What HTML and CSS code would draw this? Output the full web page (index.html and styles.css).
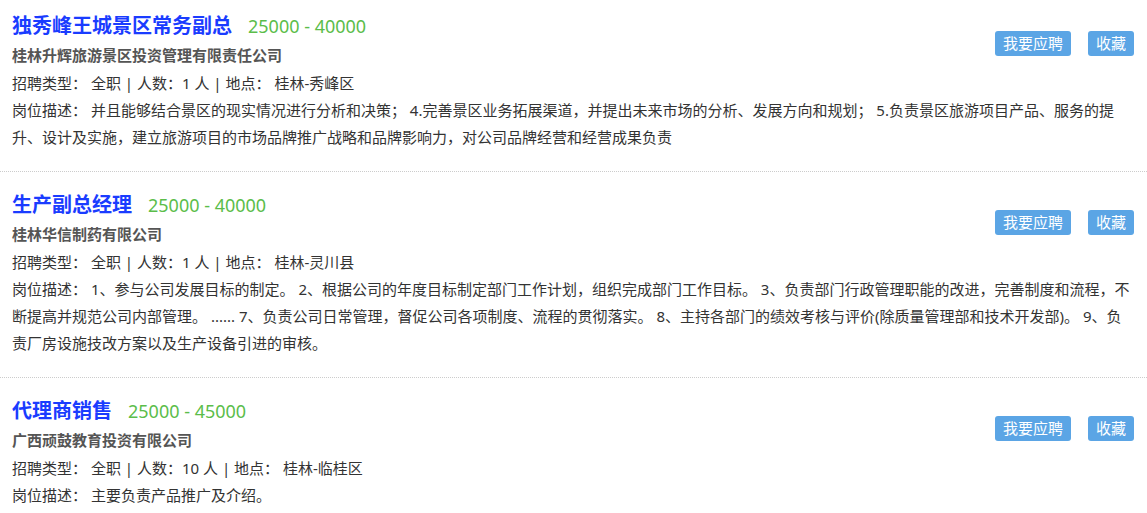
FILE: index.html
```html
<!DOCTYPE html>
<html lang="zh-CN">
<head>
    <meta charset="UTF-8">
    <meta name="viewport" content="width=device-width, initial-scale=1.0">
    <title>职位列表</title>
    <link rel="stylesheet" href="styles.css">
</head>
<body>
    <ul class="job-list">
        <li class="job">
            <div class="actions">
                <a href="#" class="btn">我要应聘</a>
                <a href="#" class="btn">收藏</a>
            </div>
            <h2 class="job-title"><a href="#">独秀峰王城景区常务副总</a><span class="salary">25000 - 40000</span></h2>
            <p class="company">桂林升辉旅游景区投资管理有限责任公司</p>
            <p class="info">招聘类型： 全职 | 人数：1 人 | 地点： 桂林-秀峰区</p>
            <p class="desc">岗位描述： 并且能够结合景区的现实情况进行分析和决策； 4.完善景区业务拓展渠道，并提出未来市场的分析、发展方向和规划； 5.负责景区旅游项目产品、服务的提升、设计及实施，建立旅游项目的市场品牌推广战略和品牌影响力，对公司品牌经营和经营成果负责</p>
        </li>
        <li class="job">
            <div class="actions">
                <a href="#" class="btn">我要应聘</a>
                <a href="#" class="btn">收藏</a>
            </div>
            <h2 class="job-title"><a href="#">生产副总经理</a><span class="salary">25000 - 40000</span></h2>
            <p class="company">桂林华信制药有限公司</p>
            <p class="info">招聘类型： 全职 | 人数：1 人 | 地点： 桂林-灵川县</p>
            <p class="desc">岗位描述： 1、参与公司发展目标的制定。 2、根据公司的年度目标制定部门工作计划，组织完成部门工作目标。 3、负责部门行政管理职能的改进，完善制度和流程，不断提高并规范公司内部管理。 ...... 7、负责公司日常管理，督促公司各项制度、流程的贯彻落实。 8、主持各部门的绩效考核与评价(除质量管理部和技术开发部)。 9、负责厂房设施技改方案以及生产设备引进的审核。</p>
        </li>
        <li class="job">
            <div class="actions">
                <a href="#" class="btn">我要应聘</a>
                <a href="#" class="btn">收藏</a>
            </div>
            <h2 class="job-title"><a href="#">代理商销售</a><span class="salary">25000 - 45000</span></h2>
            <p class="company">广西顽鼓教育投资有限公司</p>
            <p class="info">招聘类型： 全职 | 人数：10 人 | 地点： 桂林-临桂区</p>
            <p class="desc">岗位描述： 主要负责产品推广及介绍。</p>
        </li>
    </ul>
</body>
</html>
```

FILE: styles.css
```css
body {
    margin: 0;
    font-family: "Noto Sans", "Noto Sans CJK SC", sans-serif;
    font-size: 15px;
    color: #333;
    background-color: #fff;
}
.job-list {
    list-style: none;
    margin: 0;
    padding: 0;
}
.job {
    padding: 18px 12px 20px 12px;
    border-bottom: 1px dotted #ccc;
}
.job:first-child {
    padding-top: 11px;
}
.job:last-child {
    border-bottom: none;
}
.job p {
    margin: 0;
}
.actions {
    float: right;
    display: flex;
    gap: 17px;
    margin-top: 20px;
    margin-right: 1px;
}
.btn {
    display: block;
    height: 25px;
    line-height: 25px;
    padding: 0 8px;
    background-color: #5ba5e5;
    color: #fff;
    border-radius: 3px;
    text-decoration: none;
    font-size: 15px;
}
.job-title {
    margin: 0;
    height: 30px;
    line-height: 30px;
    font-size: 20px;
    font-weight: bold;
}
.job-title a {
    color: #1a3cff;
    text-decoration: none;
}
.salary {
    margin-left: 16px;
    font-size: 18px;
    font-weight: normal;
    color: #5bbd4a;
}
.company {
    line-height: 28px;
    font-weight: bold;
    color: #555;
}
.info {
    line-height: 28px;
}
.desc {
    line-height: 27px;
}
```
